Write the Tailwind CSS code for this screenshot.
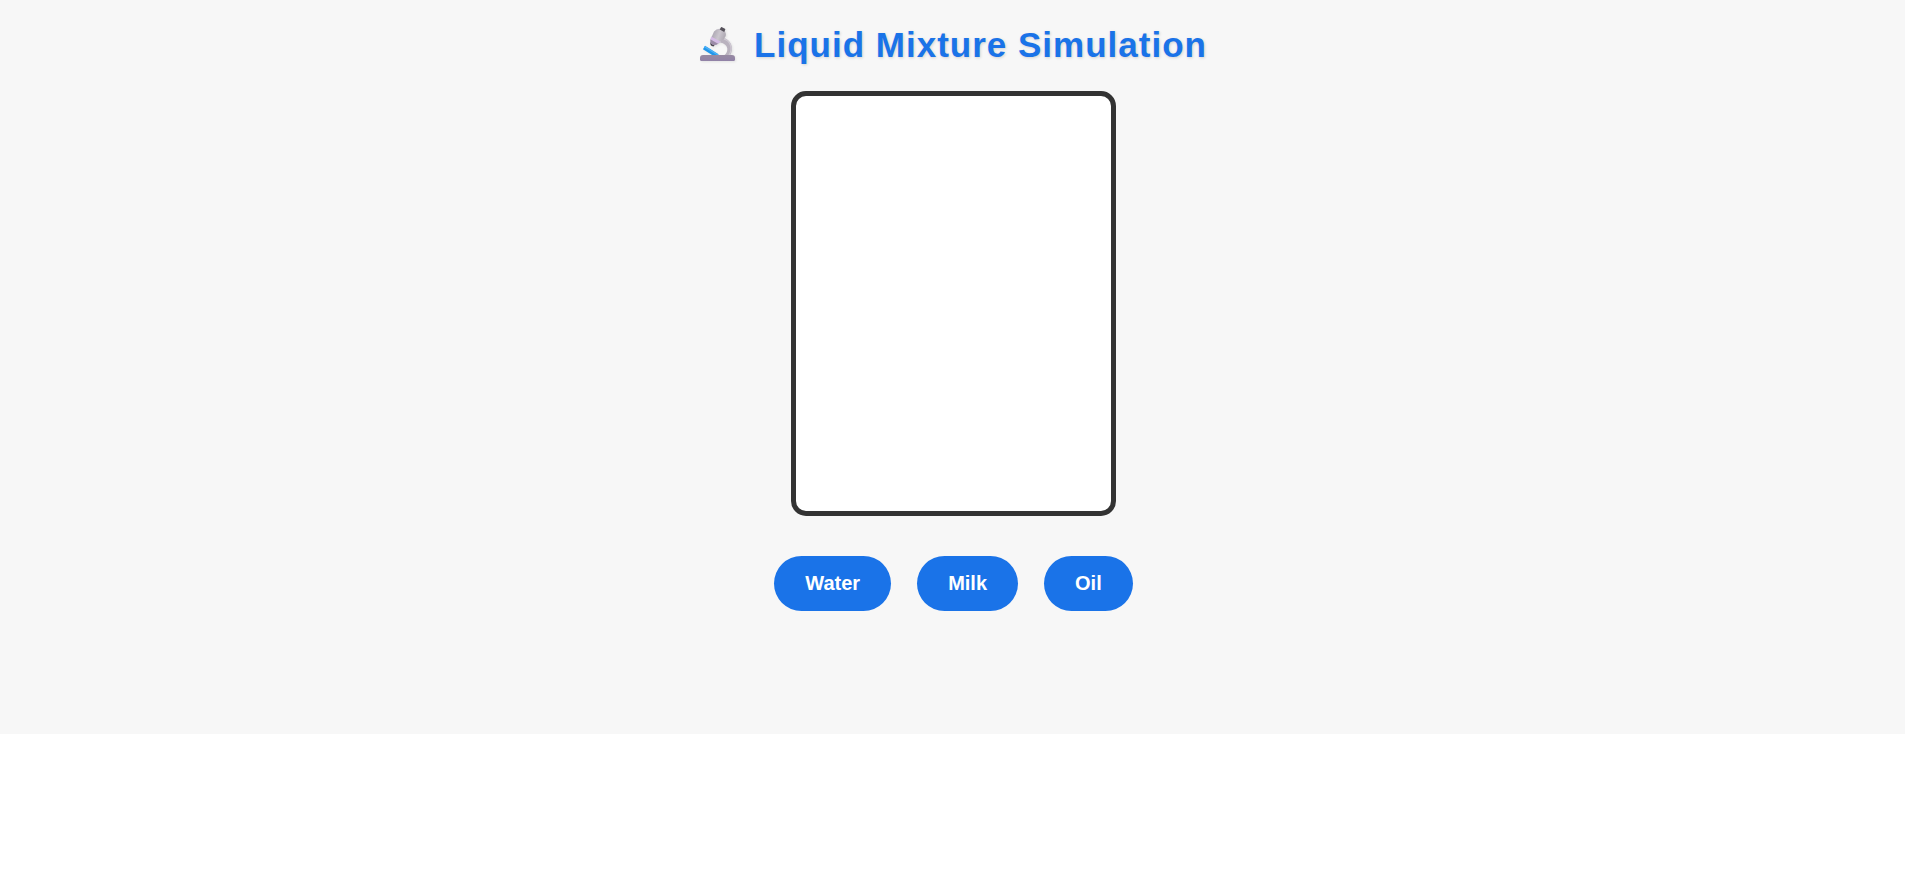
<!DOCTYPE html>
<html lang="en">
<head>
<meta charset="utf-8">
<meta name="viewport" content="width=device-width, initial-scale=1">
<title>Liquid Mixture Simulation</title>
<script src="https://cdn.jsdelivr.net/npm/@tailwindcss/browser@4"></script>
</head>
<body class="bg-white font-['Liberation_Sans',Arial,sans-serif]">
<main class="flex flex-col items-center bg-[#f7f7f7] pt-6 pr-4 pb-[123px] pl-[18px]">
  <h1 class="flex items-center gap-[18px] text-[35px] leading-[42px] font-bold tracking-[1px] text-[#1a73e8] text-shadow-[1px_1px_3px_rgb(0_0_0/0.15)]">
    <svg class="size-9 shrink-0 drop-shadow-[1px_1px_1px_rgb(0_0_0/0.08)]" viewBox="0 0 36 36" aria-hidden="true">
      <defs>
        <linearGradient id="tube" x1="0" y1="0.3" x2="1" y2="0.7">
          <stop offset="0" stop-color="#a59fab"/><stop offset="0.5" stop-color="#cbc6ce"/><stop offset="1" stop-color="#a6a1ab"/>
        </linearGradient>
        <linearGradient id="base" x1="0" y1="0" x2="0" y2="1">
          <stop offset="0" stop-color="#978aa2"/><stop offset="1" stop-color="#9182a7"/>
        </linearGradient>
      </defs>
      <path d="M22.500 10.500C31 12 34.500 21 30 28.500H24C29 25 29 17 20 15.500Z" fill="#b9b2be"/>
      <path d="M24 12C31 14 33 22 29 28" fill="none" stroke="#d0cad4" stroke-width="1.200"/>
      <path d="M4 20.500 17.500 29" stroke="#2196eb" stroke-width="4"/>
      <path d="M4.500 19.700 18 28" stroke="#4db2f7" stroke-width="1.400"/>
      <path d="M10.500 15 15 17.500 13.500 19.500Q9.500 19 10.500 15Z" fill="#4c4652"/>
      <path d="M14 4.500Q17 1 21 2L25 4.500Q27 8 24.500 11L18.500 16.500Q15.500 19 12.500 17.500Q10 16 10.500 12.500Z" fill="url(#tube)"/>
      <path d="M11 9.500 20.500 14.500 18 16.800 10.500 12.500Z" fill="#d5bce6"/>
      <path d="M10.500 12.500 18 16.800Q15 18.800 12.500 17.500Q10 16 10.500 12.500Z" fill="#9c8ba8"/>
      <path d="M21 0.300Q21.500 0 22 0.200L25 1.700Q25.500 2.200 25.200 2.800L24.200 5 19.700 2.500Z" fill="#55515a"/>
      <path d="M3 28H32Q35 28 35 31V32.500Q35 34 33.500 34H1.500Q0 34 0 32.500V31Q0 28 3 28Z" fill="url(#base)"/>
    </svg>
    Liquid Mixture Simulation
  </h1>
  <div class="mt-[25px] h-[425px] w-full max-w-[325px] rounded-[15px] border-5 border-[#333] bg-white" role="img" aria-label="Mixture container"></div>
  <div class="mt-10 flex flex-wrap justify-center gap-[26px] text-[20px] leading-[23px] font-bold text-white">
    <button type="button" class="cursor-pointer rounded-full bg-[#1a73e8] px-[31px] py-4 hover:bg-[#155ab6]">Water</button>
    <button type="button" class="cursor-pointer rounded-full bg-[#1a73e8] px-[31px] py-4 hover:bg-[#155ab6]">Milk</button>
    <button type="button" class="cursor-pointer rounded-full bg-[#1a73e8] px-[31px] py-4 hover:bg-[#155ab6]">Oil</button>
  </div>
</main>
</body>
</html>
